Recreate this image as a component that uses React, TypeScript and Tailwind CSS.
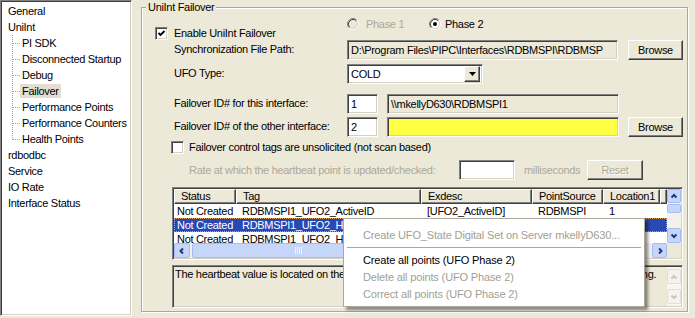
import React from 'react';

const sunken =
  'border border-t-[#808080] border-l-[#808080] border-r-white border-b-white shadow-[inset_1px_1px_0_#404040,inset_-1px_-1px_0_#d4d0c8]';
const raised =
  'border border-t-white border-l-white border-r-[#404040] border-b-[#404040] shadow-[inset_-1px_-1px_0_#808080]';

const tree = [
  { label: 'General' },
  { label: 'UniInt' },
  { label: 'PI SDK', child: true },
  { label: 'Disconnected Startup', child: true },
  { label: 'Debug', child: true },
  { label: 'Failover', child: true, selected: true },
  { label: 'Performance Points', child: true },
  { label: 'Performance Counters', child: true },
  { label: 'Health Points', child: true, last: true },
  { label: 'rdbodbc' },
  { label: 'Service' },
  { label: 'IO Rate' },
  { label: 'Interface Status' },
];

const cols = [
  { name: 'Status', w: 'w-[62px]' },
  { name: 'Tag', w: 'w-[185px]' },
  { name: 'Exdesc', w: 'w-[111px]' },
  { name: 'PointSource', w: 'w-[71px]' },
  { name: 'Location1', w: 'w-[57px]' },
];

const rows = [
  ['Not Created', 'RDBMSPI1_UFO2_ActiveID', '[UFO2_ActiveID]', 'RDBMSPI', '1'],
  ['Not Created', 'RDBMSPI1_UFO2_Heartbeat1', '[UFO2_Heartbeat1]', 'RDBMSPI', '1'],
  ['Not Created', 'RDBMSPI1_UFO2_Heartbeat2', '[UFO2_Heartbeat2]', 'RDBMSPI', '1'],
];

function Checkbox({ checked }: { checked?: boolean }) {
  return (
    <span className={`w-[13px] h-[13px] bg-white flex items-center justify-center shrink-0 ${sunken}`}>
      {checked && (
        <svg width="9" height="9" viewBox="0 0 9 9">
          <path d="M1.5 4 L3.5 6 L7.5 2" stroke="#000" strokeWidth="1.8" fill="none" />
        </svg>
      )}
    </span>
  );
}

function Radio({ checked, disabled }: { checked?: boolean; disabled?: boolean }) {
  return (
    <svg width="12" height="12" viewBox="0 0 12 12" className="shrink-0">
      <circle cx="6" cy="6" r="4.5" fill={disabled ? '#ECE9D8' : '#fff'} />
      <path d="M2.11 9.89 A5.5 5.5 0 0 1 9.89 2.11" stroke="#808080" fill="none" />
      <path d="M9.89 2.11 A5.5 5.5 0 0 1 2.11 9.89" stroke="#fff" fill="none" />
      <path d="M2.82 9.18 A4.5 4.5 0 0 1 9.18 2.82" stroke="#404040" fill="none" />
      <path d="M9.18 2.82 A4.5 4.5 0 0 1 2.82 9.18" stroke="#d4d0c8" fill="none" />
      {checked && <circle cx="6" cy="6" r="2" fill="#000" />}
    </svg>
  );
}

const arrows: Record<string, string> = {
  up: 'M1.5 5.5 L4 3 L6.5 5.5',
  down: 'M1.5 2.5 L4 5 L6.5 2.5',
  left: 'M5 1.5 L2.5 4 L5 6.5',
  right: 'M3 1.5 L5.5 4 L3 6.5',
};

function ScrollBtn({ dir, disabled, className = '' }: { dir: string; disabled?: boolean; className?: string }) {
  return (
    <div
      className={`flex items-center justify-center rounded-[2px] border ${
        disabled ? 'bg-[#F4F3EE] border-[#E2DFD2]' : 'bg-[#C6D6FB] border-[#A4BCF1]'
      } ${className}`}
    >
      <svg width="8" height="8" viewBox="0 0 8 8">
        <path d={arrows[dir]} stroke={disabled ? '#C9C7BA' : '#1F3A7A'} strokeWidth="2" fill="none" />
      </svg>
    </div>
  );
}

export default function App() {
  return (
    <div className="relative w-[695px] h-[318px] bg-[#ECE9D8] flex overflow-hidden text-[11px] leading-[13px] tracking-[-0.3px] text-black font-['Liberation_Sans',Arial,sans-serif]">
      {/* tree */}
      <div className={`w-[132px] h-[316px] bg-white pt-[2px] ${sunken}`}>
        {tree.map((t) => (
          <div key={t.label} className="h-[16px] flex items-center whitespace-nowrap">
            {t.child ? (
              <svg width="19" height="16" viewBox="0 0 19 16" className="shrink-0">
                <line x1="11.5" y1="0" x2="11.5" y2={t.last ? 9 : 16} stroke="#A0A0A0" strokeDasharray="1 1" />
                <line x1="12" y1="8.5" x2="19" y2="8.5" stroke="#A0A0A0" strokeDasharray="1 1" />
              </svg>
            ) : (
              <span className="w-[5px] shrink-0" />
            )}
            <span className={`px-[2px] leading-[14px] ${t.selected ? 'bg-[#E2DFD1]' : ''}`}>{t.label}</span>
          </div>
        ))}
      </div>

      {/* group box */}
      <div className="pl-[9px] pt-[7px]">
        <div className="relative w-[547px] h-[305px] border border-[#ACA899] shadow-[inset_1px_1px_0_#fff,1px_1px_0_#fff] flex flex-col">
          <span className="absolute left-[4px] -top-[7px] px-[2px] bg-[#ECE9D8]">UniInt Failover</span>

          <div className="flex">
            <div className="ml-[13px] w-[192px] flex flex-col">
              <div className="mt-[19px] h-[13px] flex items-center gap-[6px]">
                <Checkbox checked />
                <span>Enable UniInt Failover</span>
              </div>
              <div className="mt-[3px] ml-[19px]">Synchronization File Path:</div>
              <div className="mt-[11px] ml-[19px]">UFO Type:</div>
              <div className="mt-[17px] ml-[19px]">Failover ID# for this interface:</div>
              <div className="mt-[10px] ml-[19px] whitespace-nowrap">Failover ID# of the other interface:</div>
            </div>

            <div className="flex flex-col">
              <div className="mt-[9px] h-[14px] flex items-center">
                <Radio disabled />
                <span className="ml-[7px] w-[63px] text-[#ACA899]">Phase 1</span>
                <Radio checked />
                <span className="ml-[4px]">Phase 2</span>
              </div>
              <div className="mt-[9px] flex h-[20px]">
                <div className={`w-[271px] flex items-center pl-[3px] overflow-hidden whitespace-nowrap ${sunken}`}>
                  D:\Program Files\PIPC\Interfaces\RDBMSPI\RDBMSP
                </div>
                <button className={`ml-[10px] w-[55px] bg-[#ECE9D8] ${raised}`}>Browse</button>
              </div>
              <div className={`mt-[4px] w-[136px] h-[20px] bg-white flex items-center justify-between p-[2px] pl-[3px] ${sunken}`}>
                <span>COLD</span>
                <span className={`w-[16px] h-[16px] bg-[#ECE9D8] flex items-center justify-center ${raised}`}>
                  <svg width="7" height="4" viewBox="0 0 7 4">
                    <path d="M0 0 H7 L3.5 4 Z" fill="#000" />
                  </svg>
                </span>
              </div>
              <div className="mt-[10px] flex h-[20px]">
                <div className={`w-[31px] bg-white flex items-center pl-[3px] ${sunken}`}>1</div>
                <div className={`ml-[9px] w-[232px] flex items-center pl-[3px] ${sunken}`}>\\mkellyD630\RDBMSPI1</div>
              </div>
              <div className="mt-[3px] flex h-[20px]">
                <div className={`w-[31px] bg-white flex items-center pl-[3px] ${sunken}`}>2</div>
                <div className={`ml-[9px] w-[232px] bg-[#FFFF44] ${sunken}`} />
                <button className={`ml-[9px] w-[55px] bg-[#ECE9D8] ${raised}`}>Browse</button>
              </div>
            </div>
          </div>

          <div className="mt-[4px] ml-[29px] h-[13px] flex items-center gap-[5px]">
            <Checkbox />
            <span>Failover control tags are unsolicited (not scan based)</span>
          </div>

          <div className="mt-[6px] ml-[47px] h-[20px] flex items-center text-[#ACA899]">
            <span className="w-[270px] whitespace-nowrap">Rate at which the heartbeat point is updated/checked:</span>
            <div className={`w-[56px] h-[20px] bg-white ${sunken}`} />
            <span className="ml-[9px] w-[63px]">milliseconds</span>
            <button className={`w-[56px] h-[20px] bg-[#ECE9D8] [text-shadow:1px_1px_0_#fff] ${raised}`}>Reset</button>
          </div>

          {/* list */}
          <div className={`mt-[7px] ml-[30px] w-[511px] h-[73px] p-[1px] bg-white flex ${sunken}`}>
            <div className="w-[493px] flex flex-col">
              <div className="h-[15px] flex bg-[#ECE9D8]">
                {cols.map((c) => (
                  <div key={c.name} className={`${c.w} pl-[6px] flex items-center ${raised}`}>{c.name}</div>
                ))}
                <div className={`w-[7px] ${raised}`} />
              </div>
              <div className="h-[39px] overflow-hidden">
                {rows.map((r, i) => (
                  <div
                    key={i}
                    className={`h-[14px] flex whitespace-nowrap ${
                      i === 1 ? 'bg-[#2848B4] text-white outline outline-1 outline-dotted outline-[#D9A35A] -outline-offset-1' : ''
                    }`}
                  >
                    {r.map((v, j) => (
                      <div key={j} className={`${cols[j].w} leading-[14px] ${j === 0 ? 'pl-[3px]' : 'pl-[6px]'} overflow-hidden`}>
                        {v}
                      </div>
                    ))}
                  </div>
                ))}
              </div>
              <div className="h-[15px] flex bg-[#F3F1EA]">
                <ScrollBtn dir="left" className="w-[16px]" />
                <div className="ml-[2px] w-[213px] rounded-[2px] border border-[#A4BCF1] bg-[#C6D6FB] flex items-center justify-center">
                  <svg width="8" height="7" viewBox="0 0 8 7">
                    {[0.5, 2.5, 4.5, 6.5].map((x) => (
                      <line key={x} x1={x} y1="0" x2={x} y2="7" stroke="#EEF3FF" />
                    ))}
                  </svg>
                </div>
                <div className="flex-1" />
                <ScrollBtn dir="right" className="w-[15px]" />
              </div>
            </div>
            <div className="w-[14px] flex flex-col">
              <div className="h-[54px] flex flex-col bg-[#F3F1EA]">
                <ScrollBtn dir="up" className="h-[14px]" />
                <div className="mt-[1px] h-[9px] rounded-[2px] border border-[#A4BCF1] bg-[#C6D6FB]" />
                <div className="flex-1" />
                <ScrollBtn dir="down" className="h-[15px]" />
              </div>
              <div className="flex-1 bg-[#ECE9D8]" />
            </div>
          </div>

          {/* description */}
          <div className={`mt-[5px] ml-[30px] w-[511px] h-[43px] p-[1px] flex ${sunken}`}>
            <div className="w-[493px] pl-[1px] pt-[1px] overflow-hidden whitespace-nowrap">
              The heartbeat value is located on the PI Server and it is updated by the active interface while it is running.
            </div>
            <div className="w-[14px] flex flex-col justify-between py-[2px] bg-[#F7F6F1]">
              <ScrollBtn dir="up" disabled className="h-[15px]" />
              <ScrollBtn dir="down" disabled className="h-[15px]" />
            </div>
          </div>
        </div>
      </div>

      {/* context menu */}
      <div className="absolute left-[343px] top-[218px] w-[302px] h-[89px] bg-white border border-[#ACA899] shadow-[3px_3px_3px_rgba(0,0,0,0.45)] pt-[8px] whitespace-nowrap tracking-[-0.15px]">
        <div className="h-[17px] pl-[19px] flex items-center text-[#A19F93]">
          Create UFO_State Digital Set on Server mkellyD630...
        </div>
        <div className="h-[8px] pt-[3px] mx-[3px]">
          <div className="h-px bg-[#ACA899]" />
        </div>
        <div className="h-[17px] pl-[19px] flex items-center">Create all points (UFO Phase 2)</div>
        <div className="h-[17px] pl-[19px] flex items-center text-[#A19F93]">Delete all points (UFO Phase 2)</div>
        <div className="h-[17px] pl-[19px] flex items-center text-[#A19F93]">Correct all points (UFO Phase 2)</div>
      </div>
    </div>
  );
}
